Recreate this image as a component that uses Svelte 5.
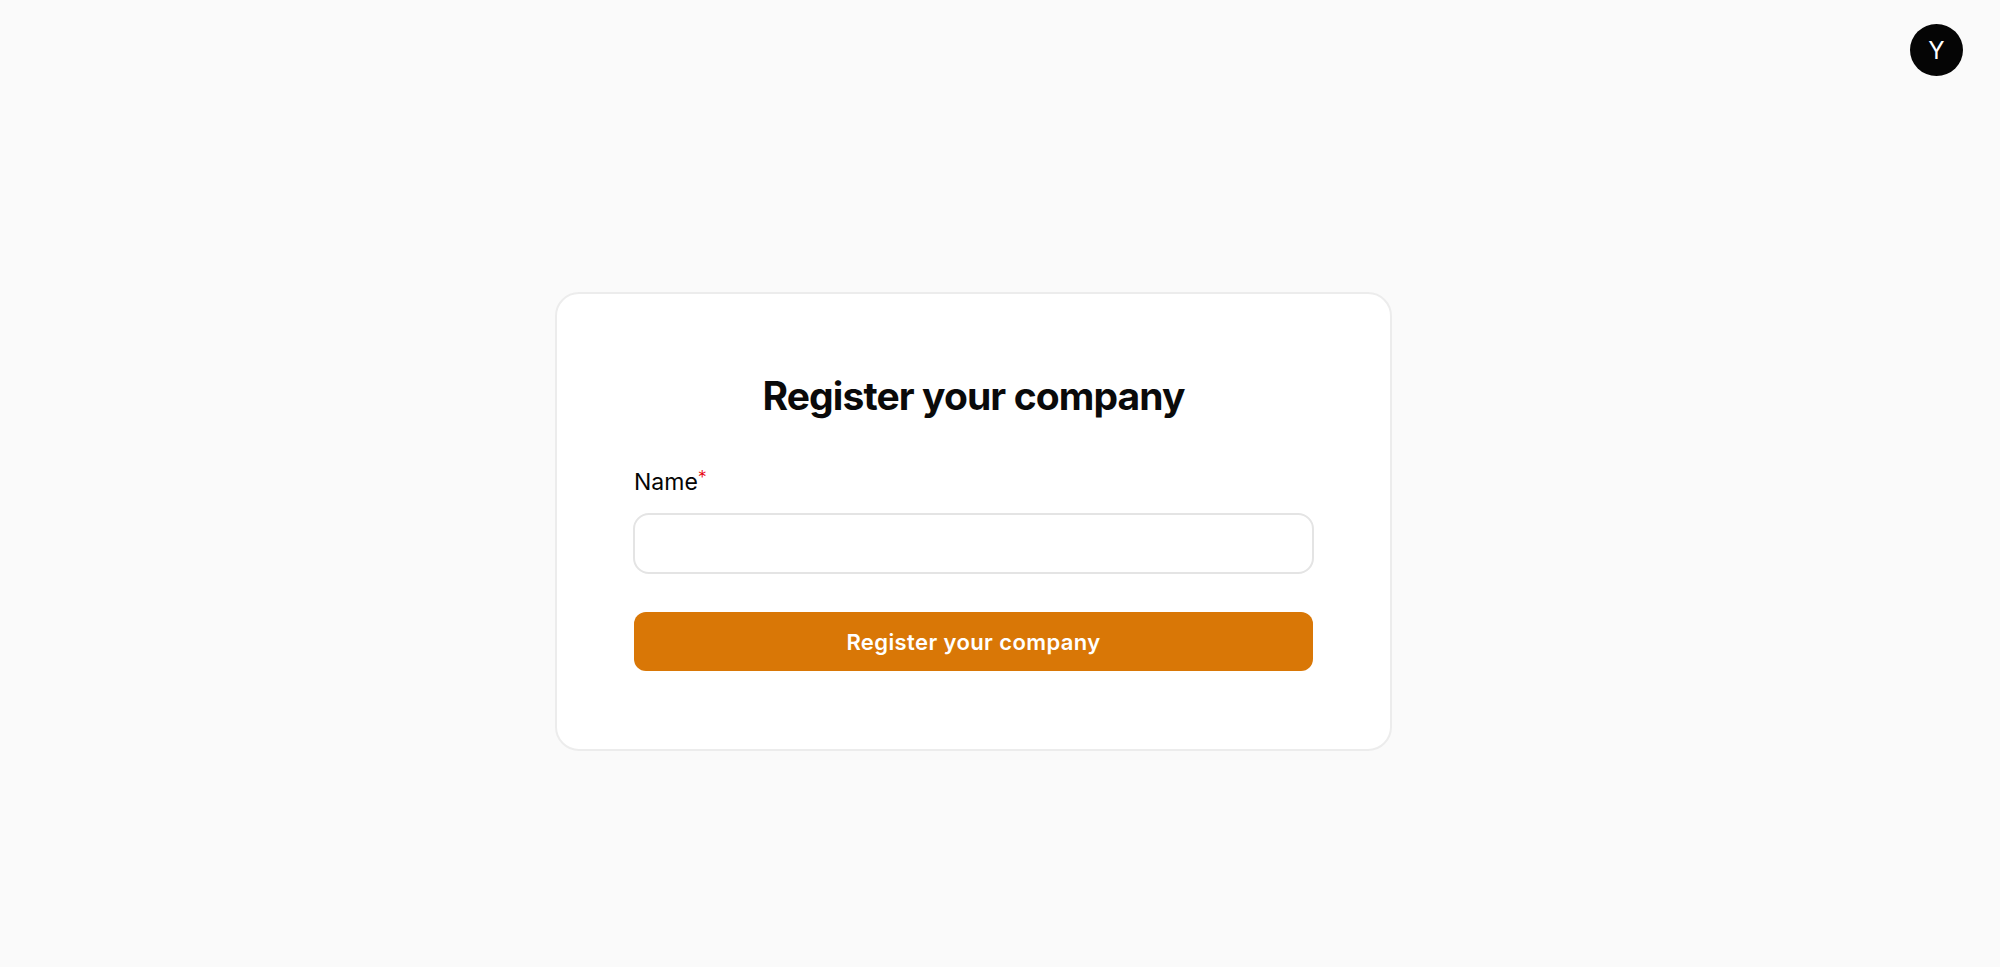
<script lang="ts">
	let name = $state("");
</script>

<div class="page">
	<header class="topbar">
		<button type="button" class="avatar" aria-label="Account menu">Y</button>
	</header>

	<main class="content">
		<form class="card" onsubmit={(event) => event.preventDefault()}>
			<h1>Register your company</h1>
			<div class="field">
				<label for="company-name">Name<span class="required">*</span></label>
				<input id="company-name" type="text" bind:value={name} />
			</div>
			<button type="submit" class="submit">Register your company</button>
		</form>
	</main>
</div>

<style>
	:global(body) {
		margin: 0;
		background: #fafafa;
		font-family: Inter, "Liberation Sans", sans-serif;
		color: #0a0a0a;
	}

	.page {
		display: flex;
		flex-direction: column;
		height: 967px;
		overflow: hidden;
	}

	.topbar {
		display: flex;
		justify-content: flex-end;
		align-items: flex-start;
		height: 76px;
		box-sizing: border-box;
		padding: 24px 37px 0 0;
	}

	.avatar {
		display: grid;
		place-items: center;
		width: 53px;
		height: 52px;
		border: 0;
		border-radius: 50%;
		background: #050505;
		color: #fff;
		font-family: inherit;
		font-size: 24px;
		padding: 0;
		cursor: pointer;
	}

	.content {
		flex: 1;
		display: flex;
		align-items: center;
		justify-content: center;
		padding-right: 53px;
	}

	.card {
		display: flex;
		flex-direction: column;
		width: 837px;
		height: 459px;
		box-sizing: border-box;
		padding: 78px 76px 0;
		background: #fff;
		border: 2px solid #ececec;
		border-radius: 24px;
	}

	h1 {
		margin: 0 0 46px;
		text-align: center;
		font-size: 39px;
		line-height: 48px;
		font-weight: 700;
		letter-spacing: -0.9px;
	}

	.field {
		display: flex;
		flex-direction: column;
		gap: 15px;
		margin-bottom: 38px;
	}

	label {
		font-size: 23px;
		line-height: 32px;
		font-weight: 400;
		padding-left: 1px;
		color: #050505;
	}

	.required {
		color: #e7000b;
		vertical-align: 6px;
		font-size: 18px;
		font-weight: 300;
		line-height: 0;
	}

	input {
		height: 61px;
		box-sizing: border-box;
		border: 2px solid #e4e4e4;
		border-radius: 16px;
		background: #fff;
		font: inherit;
		font-size: 22px;
		padding: 0 16px;
		outline: none;
	}

	.submit {
		height: 59px;
		margin: 0 1px;
		border: 0;
		border-radius: 12px;
		background: #d97706;
		color: #fff;
		font-family: inherit;
		font-size: 22px;
		font-weight: 600;
		letter-spacing: 0.4px;
		cursor: pointer;
	}
</style>
